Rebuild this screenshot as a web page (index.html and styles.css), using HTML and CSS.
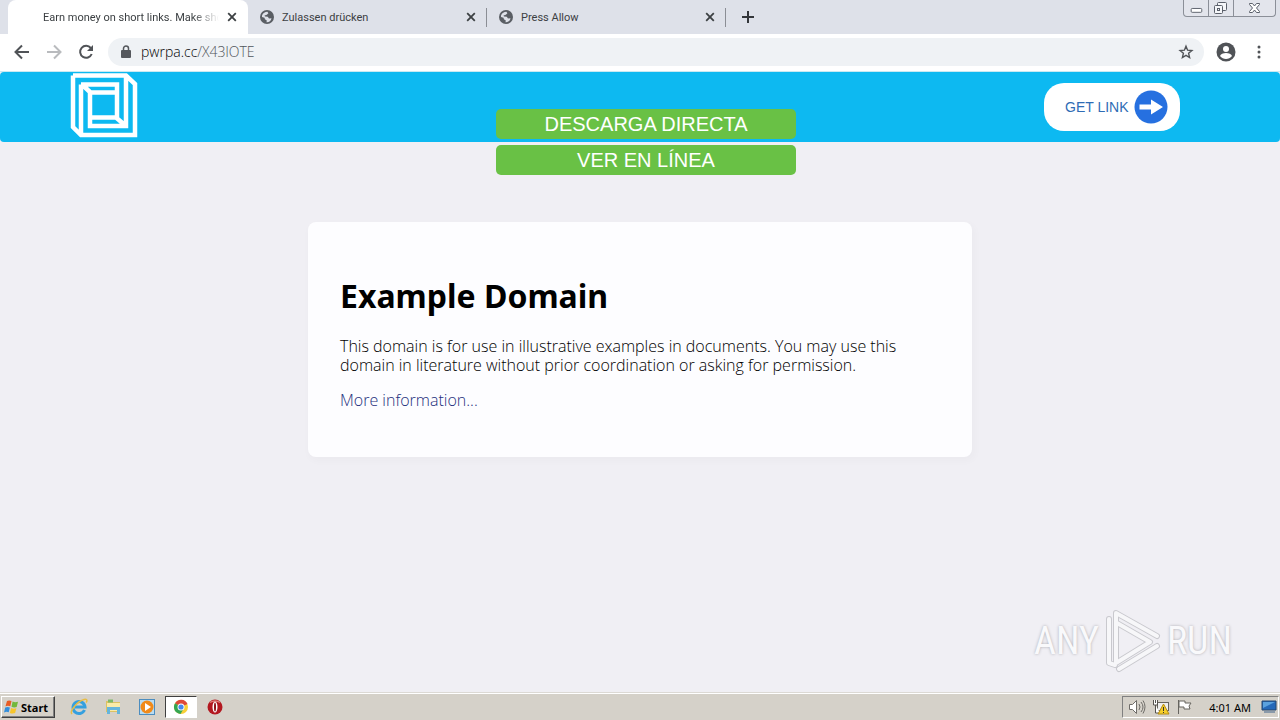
FILE: index.html
```html
<!DOCTYPE html>
<html lang="en">
<head>
<meta charset="utf-8">
<title>Earn money on short links</title>
<link rel="stylesheet" href="styles.css">
</head>
<body>
<svg class="defs" width="0" height="0" aria-hidden="true">
  <symbol id="globe" viewBox="0 0 14 14"><circle cx="7" cy="7" r="7" fill="#5a5e64"/><path d="M2 5.500C3 3 5 1.800 7.400 1.800L8.400 3.300 6.800 4.800 4.500 5.500 5 6.600 7.800 6.800 9 8.500 11.500 8.200C11 11 9 12.400 6.500 12.200L6.800 10.400 4.900 9.200 4.500 7.800 2 7z" fill="#dee1e9"/></symbol>
  <symbol id="cross" viewBox="0 0 10 10"><path d="M1.200 1.200l7.600 7.600M8.800 1.200l-7.600 7.600" stroke="#3c4043" stroke-width="1.800"/></symbol>
</svg>
<header class="tabs">
  <div class="tab active"><span class="tab-icon"></span><span class="tab-title fade">Earn money on short links. Make sho</span><button class="icon-btn close" aria-label="Close tab"><svg width="10" height="10"><use href="#cross"/></svg></button></div>
  <div class="tab"><svg class="tab-icon" width="14" height="14"><use href="#globe"/></svg><span class="tab-title">Zulassen drücken</span><button class="icon-btn close" aria-label="Close tab"><svg width="10" height="10"><use href="#cross"/></svg></button></div>
  <div class="tab"><svg class="tab-icon" width="14" height="14"><use href="#globe"/></svg><span class="tab-title">Press Allow</span><button class="icon-btn close" aria-label="Close tab"><svg width="10" height="10"><use href="#cross"/></svg></button></div>
  <button class="icon-btn new-tab" aria-label="New tab"><svg width="12" height="12" viewBox="0 0 12 12"><path d="M6 0v12M0 6h12" stroke="#33363a" stroke-width="2"/></svg></button>
  <div class="window-controls">
    <button class="icon-btn" aria-label="Minimize"><svg width="24" height="16" viewBox="0 0 25 16"><rect x="7.500" y="8.500" width="11" height="4" rx="1" fill="#fff" stroke="#5b606b"/></svg></button>
    <button class="icon-btn" aria-label="Restore"><svg width="24" height="16" viewBox="0 0 24 16" fill="#f5f6f9" stroke="#5b606b"><rect x="8.500" y="2.500" width="9" height="8" rx="1"/><rect x="5.500" y="5.500" width="8" height="8" rx="1"/><rect x="8.500" y="8.500" width="2" height="2"/></svg></button>
    <button class="icon-btn" aria-label="Close"><svg width="41" height="16" viewBox="0 0 41 16"><path d="M15.500 3.500h3l2 2.500 2-2.500h3v1l-3 3.500 3 3.500v1h-3l-2-2.500-2 2.500h-3v-1l3-3.500-3-3.500z" fill="#fff" stroke="#5b606b"/></svg></button>
  </div>
</header>
<nav class="toolbar">
  <button class="icon-btn" aria-label="Back"><svg width="16" height="16" viewBox="0 0 16 16" fill="none" stroke="#505357" stroke-width="2"><path d="M15 8H2M8 1.500L1.500 8 8 14.500"/></svg></button>
  <button class="icon-btn" aria-label="Forward"><svg width="16" height="16" viewBox="0 0 16 16" fill="none" stroke="#b9bbbe" stroke-width="2"><path d="M1 8h13M8 1.500L14.500 8 8 14.500"/></svg></button>
  <button class="icon-btn" aria-label="Reload"><svg width="16" height="16" viewBox="0 0 16 16"><path d="M12.800 4A6 6 0 1 0 13.700 10" fill="none" stroke="#505357" stroke-width="2"/><path d="M15 1v6H9z" fill="#505357"/></svg></button>
  <div class="address">
    <svg width="10" height="14" viewBox="0 0 10 14"><rect y="5" width="10" height="8" rx="1" fill="#55585d"/><path d="M2.500 5.500V3.500a2.500 2.500 0 0 1 5 0v2" fill="none" stroke="#55585d" stroke-width="1.500"/></svg>
    <a class="url" href="#">pwrpa.cc<span class="path">/X43lOTE</span></a>
    <button class="icon-btn" aria-label="Bookmark"><svg width="16" height="16" viewBox="0 0 16 16"><path d="M8 2.200l1.600 4 4.300.3-3.300 2.800 1 4.200L8 11.300l-3.600 2.200 1-4.200-3.300-2.800 4.300-.3z" fill="none" stroke="#505357" stroke-width="1.400"/></svg></button>
  </div>
  <button class="icon-btn" aria-label="Profile"><svg width="20" height="20" viewBox="0 0 20 20"><circle cx="10" cy="10" r="9.500" fill="#505357"/><circle cx="10" cy="7" r="3" fill="#fff"/><path d="M4 14c1-4 11-4 12 0-3 4-9 4-12 0z" fill="#fff"/></svg></button>
  <button class="icon-btn menu" aria-label="Menu"><svg width="4" height="14" viewBox="0 0 4 14" fill="#505357"><circle cx="2" cy="2" r="1.500"/><circle cx="2" cy="7" r="1.500"/><circle cx="2" cy="12" r="1.500"/></svg></button>
</nav>
<main class="page">
  <div class="banner">
    <div class="banner-inner">
      <svg width="68" height="66" viewBox="0 0 68 66" fill="none" stroke="#fff" stroke-width="4.500"><path d="M3 3.500H56L65 12V63H11L3 55V3.500M11 63V12.500M56 3.500V54H20V20.500H47V46M11 12.500H47V21M12 12.500L21 21M20 45.500H46L56 54"/></svg>
      <a class="get-link" href="#"><span>GET LINK</span><svg width="34" height="34" viewBox="0 0 34 34"><circle cx="17" cy="17" r="16.500" fill="#2670e0"/><path d="M5.500 14.500H17V9.500L29 17 17 24.500V19.500H5.500z" fill="#fff"/></svg></a>
    </div>
    <div class="downloads"><button>DESCARGA DIRECTA</button><button>VER EN LÍNEA</button></div>
  </div>
  <article class="card">
    <h1>Example Domain</h1>
    <p>This domain is for use in illustrative examples in documents. You may use this domain in literature without prior coordination or asking for permission.</p>
    <p><a href="#">More information...</a></p>
  </article>
  <div class="watermark"><span>ANY</span><svg width="56" height="64" viewBox="0 0 56 64" fill="none" stroke-linejoin="round" stroke-linecap="round"><path d="M4 10V54L10 56M11 54V4L52 27M12 14L45 33 11 54M14 60L52 37" stroke="#c9c9ce" stroke-width="6"/><path d="M4 10V54L10 56M11 54V4L52 27M12 14L45 33 11 54M14 60L52 37" stroke="#f7f7f9" stroke-width="4"/></svg><span>RUN</span></div>
</main>
<footer class="taskbar">
  <button class="start"><svg width="16" height="16" viewBox="0 0 16 16"><path d="M3 2q2-1 4.500 0L6.300 7.200Q4 6.200 1.500 7.200z" fill="#e85c24"/><path d="M8.600 2.500q2.500 1.200 5.400.2L12.700 8q-2.700 1-5.200-.3z" fill="#72b83c"/><path d="M1.200 8.400q2.500-1 4.700 0L4.700 13.300Q2.500 12.300 0 13.400z" fill="#328edc"/><path d="M7.100 9q2.500 1.200 5.300.2l-1.300 4.900q-2.700 1-5.200-.2z" fill="#f7c52b"/></svg>Start</button>
  <div class="launchers">
    <button class="launch" aria-label="Internet Explorer"><svg width="18" height="18" viewBox="0 0 18 18" fill="none"><path d="M14.500 12A6 6 0 1 1 15 9H5" stroke="#35a0df" stroke-width="3"/><path d="M2 16C-1 13 8 3 14 1.500c4-1 3 2 2 3" stroke="#e8bd45" stroke-width="1.500"/></svg></button>
    <button class="launch" aria-label="Explorer"><svg width="18" height="18" viewBox="0 0 18 18"><path d="M2 3h5l1 1h8v10H2z" fill="#dcc263"/><path d="M4 1.500h5v3H4z" fill="#7db969"/><path d="M3 5h13v8H3z" fill="#f9eba8"/><path d="M3 9h13v7h-3v-4H6v4H3z" fill="#65b5dc"/></svg></button>
    <button class="launch" aria-label="Media Player"><svg width="18" height="18" viewBox="0 0 18 18"><rect x="1.500" y="1.500" width="15" height="15" fill="#b9dcf2" stroke="#4c8dbf"/><circle cx="9" cy="9" r="6.500" fill="#f18a19"/><path d="M7 5l6 4-6 4z" fill="#fff"/></svg></button>
    <button class="launch current" aria-label="Chrome"><svg width="16" height="16" viewBox="0 0 16 16"><circle cx="8" cy="8" r="7" fill="#f8cf37"/><path d="M8 8L2 4.300A7 7 0 0 1 14.500 5z" fill="#df4938"/><path d="M8 8L2 4.300A7 7 0 0 0 7.500 15l3-5z" fill="#35a652"/><circle cx="8" cy="8" r="3.500" fill="#fff"/><circle cx="8" cy="8" r="2.600" fill="#4688ed"/></svg></button>
    <button class="launch" aria-label="Opera"><svg width="16" height="16" viewBox="0 0 16 16"><circle cx="8" cy="8" r="7.500" fill="#b31820"/><path d="M3 3.500a7 5 0 0 1 10 0" stroke="#df7d78" stroke-width="1.500" fill="none"/><ellipse cx="8" cy="8" rx="2.500" ry="5.500" fill="#fff"/><ellipse cx="8" cy="8" rx="1" ry="4.500" fill="#8c1016"/></svg></button>
  </div>
  <div class="tray">
    <svg width="18" height="16" viewBox="0 0 18 16" fill="#fff" stroke="#6e6c68"><path d="M1.500 5.500h3l4-4v13l-4-4h-3z"/><path d="M11 5q2 3 0 6M13 3q4 5 0 10M15 1.500q4 6 0 13" fill="none"/></svg>
    <svg width="18" height="16" viewBox="0 0 18 16"><rect x="5.500" y="3.500" width="11" height="8" fill="#eee" stroke="#66645f"/><path d="M1.500 1v5h4V1M3.500 1v3M3.500 6v8H8" fill="#fff" stroke="#55534f"/><path d="M11.500 5L17 15H6z" fill="#f6cf29" stroke="#b48b15"/><path d="M11.500 8v4M11.500 13v1" stroke="#333"/></svg>
    <svg width="18" height="16" viewBox="0 0 18 16"><path d="M2.500 1v14M3 2h6v2h6l-2 3 1 3H8V8H3z" fill="#fff" stroke="#66645f"/></svg>
    <time>4:01 AM</time>
    <svg width="16" height="14" viewBox="0 0 16 14"><path d="M1 1h14v9H1z" fill="#2569b9" stroke="#24466f"/><path d="M2 2h12L2 8z" fill="#5ba2df"/><path d="M3 12h11" stroke="#8a9aaa" stroke-width="2"/></svg>
  </div>
</footer>
</body>
</html>
```
FILE: styles.css
```css
* { box-sizing: border-box; }
body { margin: 0; min-height: 100vh; display: flex; flex-direction: column; background: #f0eff4; font-family: "Open Sans", "Noto Sans", sans-serif; }
button { font: inherit; color: inherit; border: 0; padding: 0; background: none; }
a { text-decoration: none; color: inherit; }
svg { display: block; flex: none; }
.defs { position: absolute; }
.icon-btn { display: flex; align-items: center; justify-content: center; flex: none; }

.tabs { display: flex; height: 34px; padding-left: 8px; background: #dee1e9; font: 11px Roboto, sans-serif; color: #3c4043; }
.tab { display: flex; align-items: center; flex: 0 1 239px; min-width: 0; padding: 0 11px 0 12px; gap: 8px; position: relative; }
.tab.active { flex-basis: 240px; padding-left: 11px; background: #fff; border-radius: 8px 8px 0 0; }
.tab:not(.active)::after { content: ""; position: absolute; right: 0; top: 8px; width: 1px; height: 19px; background: #8b8e95; }
.tab-icon { width: 14px; flex: none; }
.tab.active .tab-icon { width: 16px; }
.tab-title { flex: 1; min-width: 0; overflow: hidden; white-space: nowrap; }
.fade { mask-image: linear-gradient(to right, #000 85%, transparent); }
.new-tab { width: 44px; }
.window-controls { display: flex; height: 17px; margin-left: auto; margin-right: 4px; border: 1px solid #8b8f98; border-top: 0; border-radius: 0 0 4px 4px; background: #e3e5ec; }
.window-controls button + button { border-left: 1px solid #8b8f98; }

.toolbar { display: flex; align-items: center; height: 38px; gap: 16px; padding: 0 14px 1px; background: #fff; border-bottom: 1px solid #c9e9f2; }
.address { flex: 1; display: flex; align-items: center; gap: 10px; height: 28px; margin-right: -4px; margin-left: -2px; padding: 0 10px 0 13px; border-radius: 14px; background: #eff2f5; }
.url { flex: 1; font-size: 14px; font-weight: 300; line-height: 20px; color: #000; }
.path { color: #50555a; }
.menu { width: 14px; }

.page { flex: 1; position: relative; }
.banner { position: relative; height: 70px; background: #0db9f1; border-radius: 4px; }
.banner-inner { display: flex; justify-content: space-between; align-items: center; max-width: 1140px; height: 66px; margin: 0 auto; padding-right: 30px; }
.get-link { display: flex; align-items: center; justify-content: space-between; width: 136px; height: 48px; margin-top: 4px; padding: 0 12px 0 21px; border-radius: 20px; background: #fff; color: #2f6cb5; font: 14px "Liberation Sans", sans-serif; }
.downloads { position: absolute; top: 37px; left: 6px; right: -6px; display: flex; flex-direction: column; align-items: center; gap: 6px; }
.downloads button { width: 300px; height: 30px; border-radius: 5px; background: #69c145; color: #fff; font: 20px "Liberation Sans", sans-serif; }
.card { max-width: 664px; margin: 80px auto 0; padding: 53px 32px 47px; border-radius: 8px; background: #fdfdff; box-shadow: 2px 3px 7px 2px rgba(0, 0, 0, .02); color: #000; }
h1 { margin: 0 0 21px; font: bold 32px/41px "Noto Sans", sans-serif; }
.card p { margin: 0 0 16px; font-size: 16px; font-weight: 300; line-height: 19px; }
.card p:last-child { margin: 0; }
.card a { color: #1c2e7c; }
.watermark { position: absolute; right: 48px; bottom: 20px; display: flex; align-items: center; gap: 6px; color: #f9f9fb; font: 38px "Roboto Condensed", "Liberation Sans Narrow", Roboto, sans-serif; text-shadow: 0 0 3px #aaaab0; }

.taskbar { display: flex; align-items: center; height: 27px; padding: 0 1px; border-top: 1px solid #fff; background: #d5d1c9; box-shadow: 0 -1px #dcd9d4; }
.start { display: flex; align-items: center; gap: 1px; width: 54px; height: 22px; padding-left: 2px; border: 1px solid; border-color: #fff #404040 #404040 #fff; box-shadow: inset -1px -1px #808080; font: bold 11px "Noto Sans", sans-serif; color: #000; }
.launchers { display: flex; gap: 2px; margin-left: 8px; }
.launch { display: flex; align-items: center; justify-content: center; width: 32px; height: 22px; }
.launch.current { border: 1px solid; border-color: #404040 #fff #fff #404040; background: #fff; }
.tray { display: flex; align-items: center; gap: 6px; height: 22px; margin-left: auto; padding: 0 1px 0 5px; border: 1px solid; border-color: #808080 #fff #fff #808080; font: 11px "Noto Sans", sans-serif; color: #000; }
.tray time { margin: 0 4px 0 9px; }
```
